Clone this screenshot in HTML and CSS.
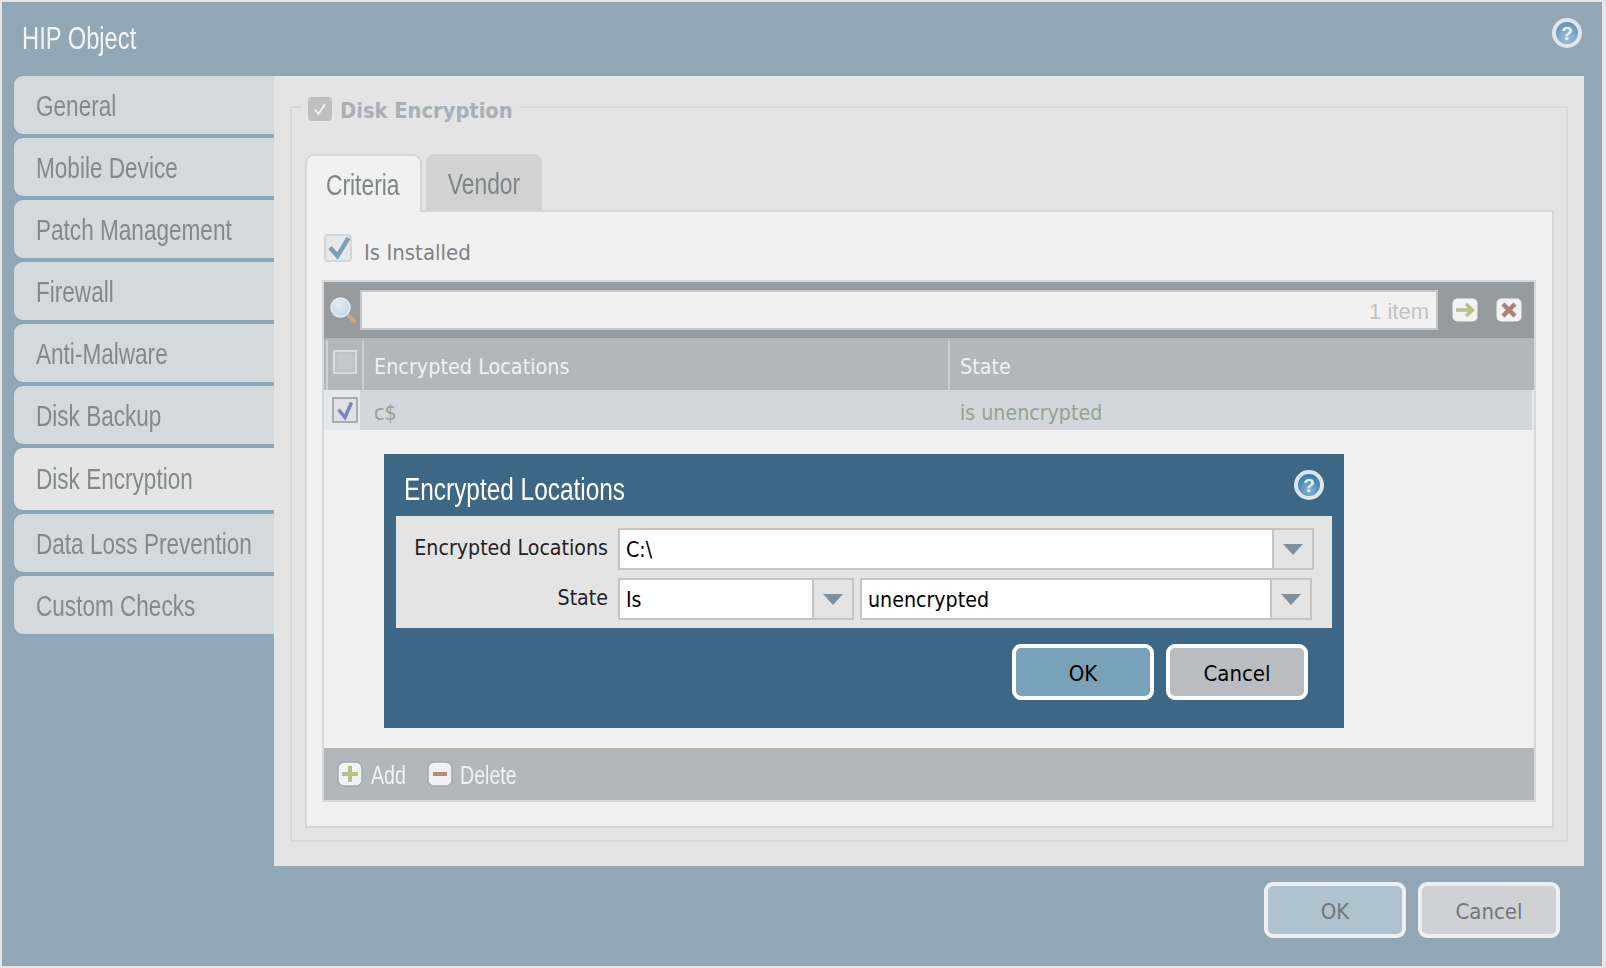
FILE: index.html
```html
<!DOCTYPE html>
<html lang="en">
<head>
<meta charset="utf-8">
<title>HIP Object</title>
<link rel="stylesheet" href="styles.css">
</head>
<body>
<svg class="defs" width="0" height="0" aria-hidden="true">
  <defs>
    <radialGradient id="helpFill" cx="50%" cy="70%" r="65%">
      <stop offset="0" stop-color="#8ab4d2"/>
      <stop offset="1" stop-color="#2f75a8"/>
    </radialGradient>
    <radialGradient id="helpDim" cx="50%" cy="70%" r="65%">
      <stop offset="0" stop-color="#a3c0d6"/>
      <stop offset="1" stop-color="#5f90b4"/>
    </radialGradient>
    <radialGradient id="lensFill" cx="40%" cy="35%" r="70%">
      <stop offset="0" stop-color="#e3edf6"/>
      <stop offset="1" stop-color="#c3d5e6"/>
    </radialGradient>
    <filter id="soft" x="-20%" y="-20%" width="140%" height="140%">
      <feGaussianBlur stdDeviation="0.5"/>
    </filter>
  </defs>
</svg>
<div class="window">
  <header class="win-head">
    <h1 class="win-title"><span class="narrow">HIP Object</span></h1>
    <svg class="help help-main" viewBox="0 0 30 30"><circle cx="15" cy="15" r="13" fill="url(#helpDim)" stroke="#dfe7ec" stroke-width="4" filter="url(#soft)"/><text x="15" y="21.500" class="help-q">?</text></svg>
  </header>
  <div class="win-main">
    <nav class="side">
      <div class="side-tab"><span class="narrow">General</span></div>
      <div class="side-tab"><span class="narrow">Mobile Device</span></div>
      <div class="side-tab"><span class="narrow">Patch Management</span></div>
      <div class="side-tab"><span class="narrow">Firewall</span></div>
      <div class="side-tab"><span class="narrow">Anti-Malware</span></div>
      <div class="side-tab"><span class="narrow">Disk Backup</span></div>
      <div class="side-tab side-active"><span class="narrow">Disk Encryption</span></div>
      <div class="side-tab"><span class="narrow">Data Loss Prevention</span></div>
      <div class="side-tab"><span class="narrow">Custom Checks</span></div>
    </nav>
    <main class="content">
      <section class="group">
        <div class="legend">
          <svg class="legend-check" viewBox="0 0 24 24"><rect width="24" height="24" rx="4" fill="#bfbfbf"/><path d="M7 12.500L10.500 17L17 7" fill="none" stroke="#f4f4f4" stroke-width="1.800"/></svg>
          <span class="legend-text">Disk Encryption</span>
        </div>
        <div class="tabs">
          <div class="tab tab-active"><span class="narrow narrow-mid">Criteria</span></div>
          <div class="tab"><span class="narrow narrow-mid">Vendor</span></div>
        </div>
        <div class="panel">
          <div class="installed">
            <svg class="check-big" viewBox="0 0 28 28"><rect x="1" y="1" width="26" height="26" rx="3" fill="#e6e9eb" stroke="#d3d6d8" stroke-width="2" filter="url(#soft)"/><path d="M6 13.500L13.500 22L24.500 4" fill="none" stroke="#7aa0b8" stroke-width="4.500" filter="url(#soft)"/></svg>
            <span class="installed-text">Is Installed</span>
          </div>
          <div class="grid">
            <div class="toolbar">
              <svg class="search" viewBox="0 0 26 26"><path d="M16 16L24 24" stroke="#c9a77f" stroke-width="4" stroke-linecap="round"/><circle cx="10.500" cy="10.500" r="9.500" fill="url(#lensFill)" stroke="#e6eef5" stroke-width="1.500" filter="url(#soft)"/></svg>
              <div class="filter">1 item</div>
              <svg class="tool-btn" viewBox="0 0 26 24"><rect x="0.500" y="0.500" width="25" height="23" rx="5" fill="#f2f2f2" filter="url(#soft)"/><path d="M4 12H20M14 6L20.500 12L14 18" fill="none" stroke="#b9c188" stroke-width="3.500"/></svg>
              <svg class="tool-btn tool-x" viewBox="0 0 26 24"><rect x="0.500" y="0.500" width="25" height="23" rx="5" fill="#f2f2f2" filter="url(#soft)"/><path d="M7 6L19 18M19 6L7 18" fill="none" stroke="#ae7f72" stroke-width="4.500"/></svg>
            </div>
            <div class="head-row">
              <div class="cell-check head-check"><span class="empty-box"></span></div>
              <div class="cell-loc head-cell">Encrypted Locations</div>
              <div class="cell-state head-cell">State</div>
            </div>
            <div class="data-row">
              <div class="cell-check data-check">
                <svg class="row-check" viewBox="0 0 26 26"><rect x="1" y="1" width="24" height="24" fill="#dfe2e5" stroke="#a9adb0" stroke-width="2"/><path d="M6.500 12.500L13 20.500L19.500 5.500" fill="none" stroke="#7b86ba" stroke-width="3.500" filter="url(#soft)"/></svg>
              </div>
              <div class="cell-loc data-cell">c$</div>
              <div class="cell-state data-cell">is unencrypted</div>
            </div>
            <div class="grid-space"></div>
            <div class="grid-foot">
              <svg class="foot-icon" viewBox="0 0 26 26"><rect x="1" y="1" width="24" height="24" rx="6" fill="#f1f1f1" stroke="#9eaab4" stroke-width="1.500" filter="url(#soft)"/><path d="M13 5V21M5 13H21" stroke="#b5c088" stroke-width="4"/></svg>
              <span class="foot-label foot-add"><span class="narrow narrow-foot">Add</span></span>
              <svg class="foot-icon foot-del" viewBox="0 0 26 26"><rect x="1" y="1" width="24" height="24" rx="6" fill="#f1f1f1" stroke="#9eaab4" stroke-width="1.500" filter="url(#soft)"/><path d="M6 13H20" stroke="#b48b7a" stroke-width="4"/></svg>
              <span class="foot-label"><span class="narrow narrow-foot">Delete</span></span>
            </div>
          </div>
        </div>
      </section>
    </main>
  </div>
  <footer class="win-foot">
    <div class="btn btn-ok-dim">OK</div>
    <div class="btn btn-cancel-dim">Cancel</div>
  </footer>

  <div class="dialog">
    <div class="dlg-head">
      <div class="dlg-title"><span class="narrow narrow-mid">Encrypted Locations</span></div>
      <svg class="help" viewBox="0 0 30 30"><circle cx="15" cy="15" r="13" fill="url(#helpFill)" stroke="#dbe7ef" stroke-width="4" filter="url(#soft)"/><text x="15" y="21.500" class="help-q">?</text></svg>
    </div>
    <div class="dlg-form">
      <div class="form-row row-one">
        <label class="form-label">Encrypted Locations</label>
        <div class="select select-full"><span class="sel-value">C:\</span><span class="sel-arrow"></span></div>
      </div>
      <div class="form-row">
        <label class="form-label">State</label>
        <div class="select select-is"><span class="sel-value">Is</span><span class="sel-arrow"></span></div>
        <div class="select select-val"><span class="sel-value">unencrypted</span><span class="sel-arrow"></span></div>
      </div>
    </div>
    <div class="dlg-btns">
      <div class="btn btn-ok">OK</div>
      <div class="btn btn-cancel">Cancel</div>
    </div>
  </div>
</div>
</body>
</html>
```
FILE: styles.css
```css
* { box-sizing: border-box; }
html, body { margin: 0; padding: 0; }
body { background: #e6e6e6; width: 1606px; height: 968px; overflow: hidden; padding: 2px; font-family: "DejaVu Sans", sans-serif; }
.defs { position: absolute; }

/* Condensed light face approximated by squeezing Liberation Sans */
.narrow { display: inline-block; white-space: nowrap; transform: scaleX(.765); transform-origin: left center; }
.narrow-mid { transform: scaleX(.787); }
.narrow-foot { transform: scaleX(.785); }
.tab .narrow { transform-origin: center center; }

.window { position: relative; width: 1600px; height: 964px; background: #92a7b6; display: flex; flex-direction: column; }

.win-head { height: 74px; flex: none; display: flex; align-items: center; justify-content: space-between; padding: 0 20px 0 20px; }
.win-title { margin: 0; font: 400 31px "Liberation Sans", sans-serif; color: #f2f5f6; }
.help { width: 30px; height: 30px; flex: none; }
.help-main { margin-top: -13px; }
.help-q { font: 700 19px "Liberation Sans", sans-serif; fill: #e9f0f5; text-anchor: middle; }

.win-main { height: 790px; flex: none; display: flex; }

.side { width: 272px; flex: none; padding-left: 12px; display: flex; flex-direction: column; gap: 4px; }
.side-tab { height: 58px; flex: none; padding: 2px 0 0 22px; display: flex; align-items: center; background: #d4d9dc; border-radius: 9px 0 0 9px; box-shadow: 0 4px 0 #8aa6ba; font: 400 29.500px "Liberation Sans", sans-serif; color: #838a8c; }
.side-active { height: 62px; padding-top: 0; background: #e5e5e5; }

.content { width: 1310px; flex: none; background: #e4e4e4; padding: 30px 16px 24px; }
.group { height: 736px; border: 2px solid #d9d9d9; padding: 0 12px 12px 13px; display: flex; flex-direction: column; }
.legend { display: flex; align-items: center; gap: 8px; align-self: flex-start; height: 24px; margin: -11px 0 0 -3px; padding: 0 6px 0 6px; background: #e4e4e4; }
.legend-check { width: 24px; height: 24px; flex: none; }
.legend-text { font: 700 21.700px "DejaVu Sans", sans-serif; font-stretch: condensed; color: #a9b0b5; white-space: nowrap; padding-top: 2px; }

.tabs { display: flex; gap: 4px; margin-top: 33px; height: 58px; flex: none; position: relative; z-index: 1; }
.tab { width: 116px; height: 56px; background: #d2d2d2; border-radius: 9px 9px 0 0; display: flex; align-items: center; justify-content: center; font: 400 29px "Liberation Sans", sans-serif; color: #7f8688; padding-top: 4px; }
.tab-active { width: 117px; height: 58px; padding-top: 2px; padding-right: 2px; background: #f1f1f1; border: 2px solid #d6d6d6; border-bottom: 0; }

.panel { flex: 1; min-height: 0; margin-top: -2px; background: #f1f1f1; border: 2px solid #d6d6d6; padding: 22px 16px 24px 15px; display: flex; flex-direction: column; }
.installed { display: flex; align-items: center; gap: 12px; height: 28px; margin-left: 2px; flex: none; }
.check-big { width: 28px; height: 28px; flex: none; }
.installed-text { font: 400 22px "DejaVu Sans", sans-serif; font-stretch: condensed; color: #7f8385; padding-top: 8px; }

.grid { flex: 1; min-height: 0; margin-top: 18px; border: 2px solid #d6d8d9; display: flex; flex-direction: column; }
.toolbar { height: 56px; flex: none; background: #979b9e; display: flex; align-items: center; padding: 0 12px 0 6px; }
.search { width: 26px; height: 26px; flex: none; margin-right: 4px; }
.filter { width: 1078px; height: 40px; flex: none; background: #f1f1f1; border: 2px solid #c5c7c8; display: flex; align-items: center; justify-content: flex-end; padding: 4px 7px 0 0; font: 400 22px "Liberation Sans", sans-serif; color: #c3c3c3; }
.tool-btn { width: 26px; height: 24px; flex: none; margin-left: 14px; }
.tool-x { margin-left: 18px; }

.head-row { height: 52px; flex: none; background: #b3b7b9; display: flex; }
.data-row { height: 40px; flex: none; background: #d1d7da; border-right: 2px solid #e3e9ec; display: flex; }
.cell-check { width: 38px; flex: none; display: flex; align-items: center; justify-content: center; }
.head-check { margin-left: 2px; border-left: 2px solid #cdd0d1; border-right: 2px solid #cdd0d1; margin-top: 2px; padding-bottom: 6px; }
.data-check { width: 36px; margin-right: 4px; background: #e3e9ec; justify-content: flex-start; padding-left: 8px; }
.empty-box { width: 24px; height: 24px; background: #c6c8c9; border: 2px solid #d9dbdc; box-shadow: inset 0 0 4px #b5b7b8; }
.row-check { width: 26px; height: 26px; }
.cell-loc { width: 584px; flex: none; padding-left: 10px; }
.cell-state { flex: 1; padding-left: 10px; border-left: 2px solid #cdd0d1; }
.head-cell { font: 400 21.400px "DejaVu Sans", sans-serif; font-stretch: condensed; color: #f1f1f1; display: flex; align-items: center; padding-top: 2px; margin-top: 2px; }
.data-cell { font: 400 21.200px "DejaVu Sans", sans-serif; font-stretch: condensed; color: #95a38f; display: flex; align-items: center; padding-top: 4px; }
.data-row .cell-state { border-left-color: transparent; }
.grid-space { flex: 1; }
.grid-foot { height: 52px; flex: none; background: #b3b7b9; display: flex; align-items: center; padding-left: 13px; }
.foot-icon { width: 26px; height: 26px; flex: none; margin-right: 8px; }
.foot-del { margin-left: 22px; margin-right: 7px; }
.foot-label { font: 400 25px "Liberation Sans", sans-serif; color: #f1f1f1; padding-top: 2px; }
.foot-add { width: 34px; flex: none; }

.win-foot { flex: 1; display: flex; justify-content: flex-end; gap: 12px; padding: 16px 42px 0 0; }
.btn { width: 142px; height: 56px; border: 4px solid #fff; border-radius: 9px; display: flex; align-items: center; justify-content: center; padding-top: 3px; font: 400 22px "DejaVu Sans", sans-serif; font-stretch: condensed; color: #000; }
.btn-ok-dim { background: #afc3cf; border-color: #eef1f3; color: #757779; }
.btn-cancel-dim { background: #cfd1d5; border-color: #eef1f3; color: #757779; }
.btn-ok { background: #79a2b8; }
.btn-cancel { background: #b9bcc0; }

.dialog { position: absolute; left: 382px; top: 452px; width: 960px; height: 274px; background: #3e6786; padding: 0 12px; display: flex; flex-direction: column; }
.dlg-head { height: 62px; flex: none; display: flex; align-items: center; justify-content: space-between; padding: 0 8px 0 8px; }
.dlg-title { font: 400 31px "Liberation Sans", sans-serif; color: #fff; padding-top: 10px; }
.dlg-head .help { margin-top: 0; }
.dlg-form { height: 112px; flex: none; background: #e4e4e4; padding-top: 12px; display: flex; flex-direction: column; gap: 8px; }
.form-row { height: 42px; flex: none; display: flex; gap: 6px; }
.form-label { width: 212px; flex: none; margin-right: 4px; text-align: right; font: 400 21.200px/40px "DejaVu Sans", sans-serif; font-stretch: condensed; color: #222; white-space: nowrap; }
.select { display: flex; height: 42px; flex: none; background: #fff; border: 2px solid #c4c4c4; }
.select-full { width: 696px; }
.select-is { width: 236px; }
.select-val { width: 452px; }
.sel-value { flex: 1; padding: 2px 0 0 6px; font: 400 21.200px/36px "DejaVu Sans", sans-serif; font-stretch: condensed; color: #000; }
.sel-arrow { width: 40px; flex: none; background: #e4e4e4; border-left: 2px solid #c4c4c4; display: flex; align-items: center; justify-content: center; }
.sel-arrow::after { content: ""; border-style: solid; border-width: 11px 10px 0; border-color: #80909c transparent transparent; }
.dlg-btns { display: flex; justify-content: flex-end; gap: 12px; padding: 16px 24px 0 0; }
```
